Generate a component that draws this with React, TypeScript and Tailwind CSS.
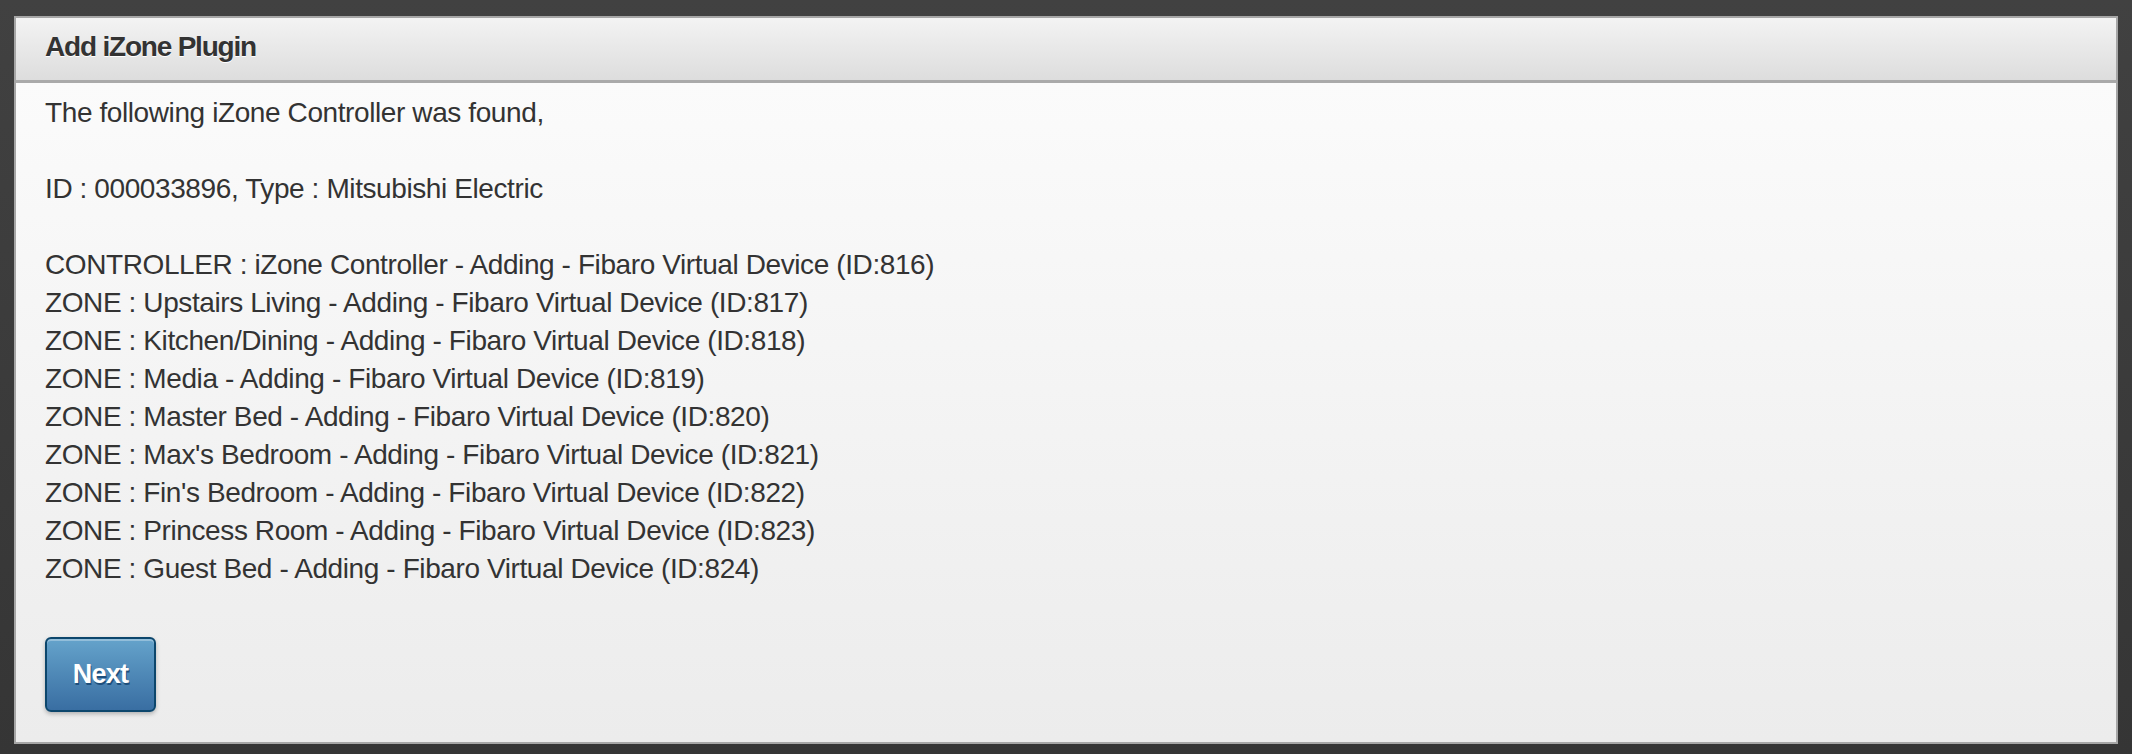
const lines = [
  "CONTROLLER : iZone Controller - Adding - Fibaro Virtual Device (ID:816)",
  "ZONE : Upstairs Living - Adding - Fibaro Virtual Device (ID:817)",
  "ZONE : Kitchen/Dining - Adding - Fibaro Virtual Device (ID:818)",
  "ZONE : Media - Adding - Fibaro Virtual Device (ID:819)",
  "ZONE : Master Bed - Adding - Fibaro Virtual Device (ID:820)",
  "ZONE : Max's Bedroom - Adding - Fibaro Virtual Device (ID:821)",
  "ZONE : Fin's Bedroom - Adding - Fibaro Virtual Device (ID:822)",
  "ZONE : Princess Room - Adding - Fibaro Virtual Device (ID:823)",
  "ZONE : Guest Bed - Adding - Fibaro Virtual Device (ID:824)",
];

export default function App() {
  return (
    <div className="min-h-screen bg-gradient-to-b from-[#414141] to-[#353535] px-[14px] pt-[16px] pb-[12px] font-['Liberation_Sans',sans-serif]">
      <div className="border-2 border-[#a6a6a6]">
        <div className="h-[65px] bg-gradient-to-b from-[#f3f3f3] to-[#dddddd] border-b-[3px] border-[#aaaaaa] flex items-center px-[29px] pb-[4px]">
          <h1 className="text-[28px] font-bold text-[#333] tracking-[-1.2px] [text-shadow:0_1px_0_#fff]">Add iZone Plugin</h1>
        </div>
        <div className="h-[659px] bg-gradient-to-b from-[#fbfbfb] to-[#ececec] px-[29px] pt-[11px]">
          <div className="text-[28px] leading-[38px] text-[#333] tracking-[-0.4px]">
            <p>The following iZone Controller was found,</p>
            <p className="mt-[38px]">ID : 000033896, Type : Mitsubishi Electric</p>
            <div className="mt-[38px]">
              {lines.map((l) => (
                <p key={l}>{l}</p>
              ))}
            </div>
          </div>
          <button className="mt-[49px] w-[111px] h-[75px] rounded-[6px] border-2 border-[#0c466c] bg-gradient-to-b from-[#65a3cb] to-[#396ea2] text-white text-[27px] font-bold tracking-[-0.8px] [text-shadow:1px_2px_0_#1d4f7c] shadow-[0_2px_4px_rgba(0,0,0,0.25),inset_0_2px_0_rgba(255,255,255,0.3)]">
            Next
          </button>
        </div>
      </div>
    </div>
  );
}
